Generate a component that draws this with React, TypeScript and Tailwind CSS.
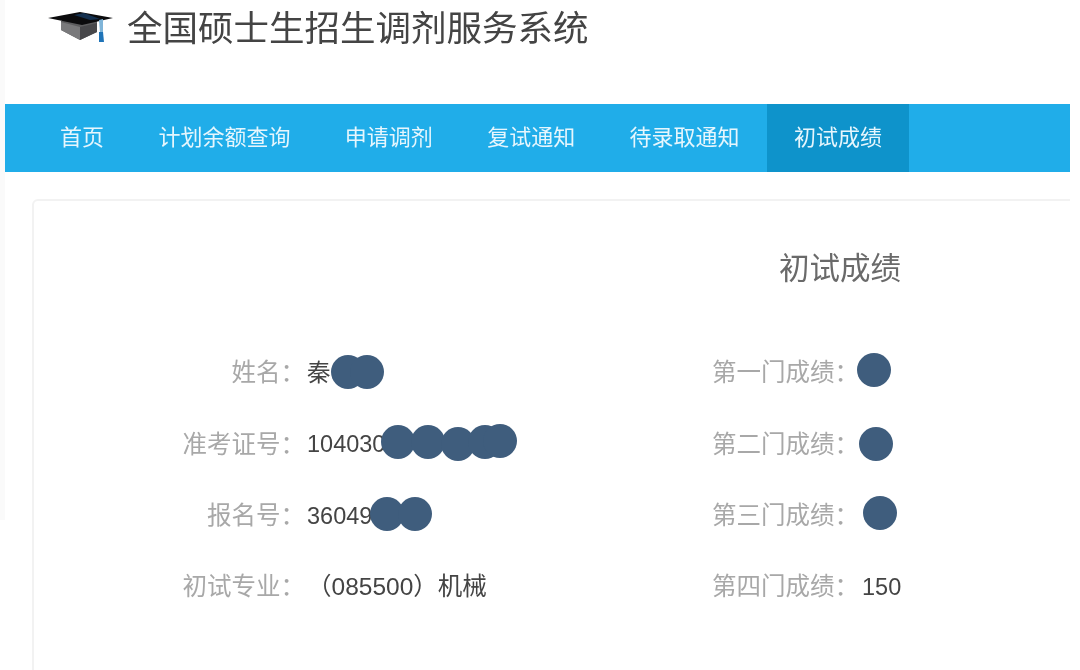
const font = "font-['Liberation_Sans','Noto_Sans_CJK_SC',sans-serif]";

function Hat() {
  return (
    <svg width="66" height="36" viewBox="0 0 66 36" className="shrink-0">
      <path d="M13 12 L49 12 L49 23 L32 31 L13 21 Z" fill="#5c5c5e" />
      <path d="M13 13 L32 18 L32 31 L13 21 Z" fill="#79797b" />
      <path d="M32 18 L49 14 L49 23 L32 31 Z" fill="#48484b" />
      <path d="M0 9 L32 3 L65 9 L34 16 Z" fill="#0b0b0d" />
      <path d="M26 6 L36 4 L52 10 L42 11 Z" fill="#14304f" />
      <path d="M51 11 L55 10 L55 24 L52 24 Z" fill="#7fb4d8" />
      <path d="M51 23 L55 23 L56 33 L51 33 Z" fill="#1f74b8" />
    </svg>
  );
}

function Blob({ className }: { className: string }) {
  return <span className={`absolute h-[34px] w-[34px] rounded-full bg-[#3f5d7d] ${className}`} />;
}

function Field({ label, value, wide, large }: { label: string; value: string; wide?: boolean; large?: boolean }) {
  return (
    <div className="flex h-[71.3px] items-center">
      <span className={`text-[#a8a8a8] ${wide ? "w-[147px] text-left" : "w-[271px] text-right"}`}>{label}</span>
      <span className={`${wide ? "ml-[3px]" : "ml-[2px]"} whitespace-nowrap text-[#444] ${large ? "text-[24.5px]" : "text-[23.5px]"}`}>{value}</span>
    </div>
  );
}

const navItems = ["首页", "计划余额查询", "申请调剂", "复试通知", "待录取通知", "初试成绩"];

export default function App() {
  return (
    <div className={`relative h-[670px] w-[1080px] overflow-hidden bg-white blur-[0.4px] ${font}`}>
      <div className="absolute left-0 top-0 h-[520px] w-[5px] bg-[#fafafa]" />
      <div className="mr-[10px] overflow-hidden pl-[5px]">
        <header className="flex h-[104px] items-start pl-[43px] pt-[9px]">
          <Hat />
          <h1 className="ml-[13px] mt-[1px] text-[35.5px] leading-[38px] font-normal text-[#444]">全国硕士生招生调剂服务系统</h1>
        </header>
        <nav className="flex h-[68px] bg-[#20ade9] pl-[27.8px] text-[22px] text-[#e6f6fd]">
          {navItems.map((item, i) => (
            <a
              key={item}
              className={`flex items-center px-[27.2px] pb-[1px] ${i === navItems.length - 1 ? "bg-[#0e93cb]" : ""}`}
            >
              {item}
            </a>
          ))}
        </nav>
        <main className="relative ml-[27px] mr-[-20px] mt-[27px] h-[500px] rounded-t-[6px] border-2 border-[#f2f2f2]">
          <h2 className="ml-[745px] mt-[47px] w-[122px] text-center text-[30.5px] leading-[40px] font-normal whitespace-nowrap text-[#6a6a6a]">初试成绩</h2>
          <div className="mt-[50px] grid grid-cols-[530px_1fr] text-[24.5px]">
            <div>
              <Field label="姓名：" value="秦" />
              <Field label="准考证号：" value="104030" />
              <Field label="报名号：" value="36049" />
              <Field label="初试专业：" value="（085500）机械" large />
            </div>
            <div className="pl-[148px]">
              <Field wide label="第一门成绩：" value="" />
              <Field wide label="第二门成绩：" value="" />
              <Field wide label="第三门成绩：" value="" />
              <Field wide label="第四门成绩：" value="150" />
            </div>
          </div>
          <Blob className="left-[297px] top-[154px]" />
          <Blob className="left-[316px] top-[154px]" />
          <Blob className="left-[347px] top-[224px]" />
          <Blob className="left-[377px] top-[224px]" />
          <Blob className="left-[407px] top-[226px]" />
          <Blob className="left-[434px] top-[224px]" />
          <Blob className="left-[449px] top-[223px]" />
          <Blob className="left-[336px] top-[296px]" />
          <Blob className="left-[364px] top-[296px]" />
          <Blob className="left-[823px] top-[152px]" />
          <Blob className="left-[825px] top-[226px]" />
          <Blob className="left-[829px] top-[295px]" />
        </main>
      </div>
    </div>
  );
}
